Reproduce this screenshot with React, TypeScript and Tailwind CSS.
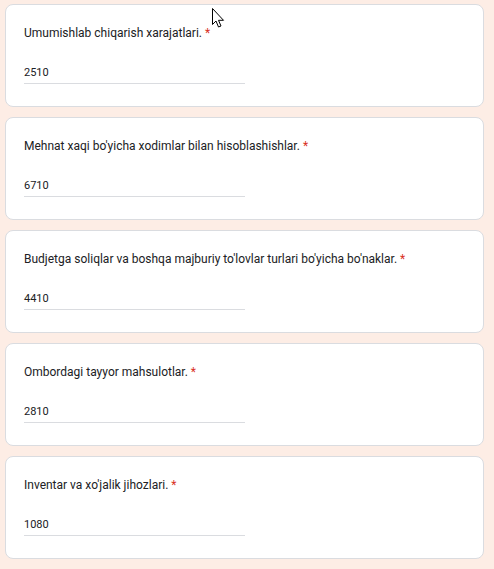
import React from 'react';

const questions = [
  { label: 'Umumishlab chiqarish xarajatlari.', value: '2510' },
  { label: "Mehnat xaqi bo'yicha xodimlar bilan hisoblashishlar.", value: '6710' },
  { label: "Budjetga soliqlar va boshqa majburiy to'lovlar turlari bo'yicha bo'naklar.", value: '4410' },
  { label: 'Ombordagi tayyor mahsulotlar.', value: '2810' },
  { label: "Inventar va xo'jalik jihozlari.", value: '1080' },
];

function QuestionCard({ label, value }: { label: string; value: string }) {
  return (
    <div className="bg-white border border-[#dadce0] rounded-lg h-[103px] pt-[18px] pl-[18px]">
      <div className="text-[12px] leading-[20px] text-[#202124]">
        {label} <span className="text-[#d93025]">*</span>
      </div>
      <div className="mt-[22px] w-[221px] border-b border-[#dadce0] pb-[2px] text-[11px] leading-[16px] text-[#202124]">
        {value}
      </div>
    </div>
  );
}

export default function App() {
  return (
    <div
      className="relative min-h-[569px] bg-[#fdede5] pt-[4px] pl-[5px] pr-[10px]"
      style={{ fontFamily: 'Roboto, "Liberation Sans", sans-serif' }}
    >
      {/* Questions */}
      <div className="flex flex-col gap-[10px]">
        {questions.map((q) => (
          <QuestionCard key={q.value} label={q.label} value={q.value} />
        ))}
      </div>

      {/* Mouse pointer */}
      <svg className="absolute left-[212px] top-[8px]" width="13" height="21" viewBox="0 0 13 21">
        <path d="M0.5 0.5 L0.5 16.5 L4 13 L6.5 19 L9 18 L6.5 12.3 L11.5 12.3 Z" fill="white" stroke="black" strokeWidth="1" />
      </svg>
    </div>
  );
}
